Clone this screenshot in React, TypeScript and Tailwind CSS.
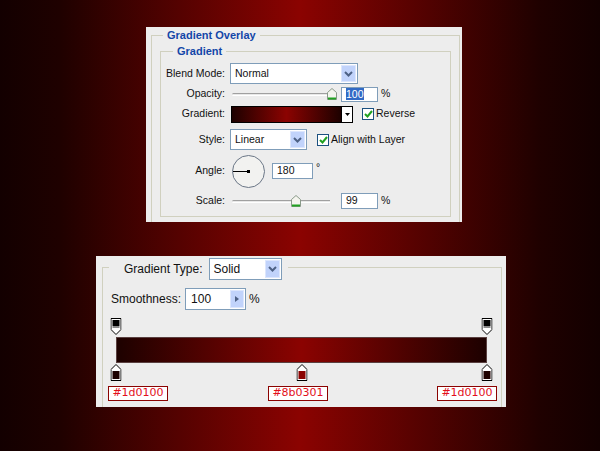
import React from "react";

// ─── Types ────────────────────────────────────────────────────────────────────

interface Stop {
  pos: number; // percent along the bar
  color: string;
}

const OPACITY_STOPS = [0, 100];

const COLOR_STOPS: Stop[] = [
  { pos: 0, color: "#1d0100" },
  { pos: 50, color: "#8b0301" },
  { pos: 100, color: "#1d0100" },
];

// ─── Small controls ───────────────────────────────────────────────────────────

function Chevron() {
  return (
    <svg width="9" height="6" viewBox="0 0 9 6">
      <path d="M1 1 L4.5 4.5 L8 1" fill="none" stroke="#4d6185" strokeWidth="2" />
    </svg>
  );
}

function Select({ value, className }: { value: string; className: string }) {
  return (
    <div className={`flex bg-white border border-[#7f9db9] ${className}`}>
      <span className="flex-1 flex items-center pl-[4px]">{value}</span>
      <div className="w-[15px] m-[1px] flex items-center justify-center bg-[#c1d3fb] border border-[#dce6fd]">
        <Chevron />
      </div>
    </div>
  );
}

function Check() {
  return (
    <div className="w-[12px] h-[12px] bg-white border border-[#1c5180] flex items-center justify-center">
      <svg width="9" height="8" viewBox="0 0 9 8">
        <path d="M1 4 L3.5 6.5 L8 1" fill="none" stroke="#21a121" strokeWidth="2" />
      </svg>
    </div>
  );
}

function Thumb() {
  return (
    <svg width="10" height="12" viewBox="0 0 10 12">
      <path d="M0.5 4.5 L5 0.5 L9.5 4.5 V11.5 H0.5 Z" fill="#f4f4ee" stroke="#8a9a8a" />
      <rect x="1" y="9.5" width="8" height="2" fill="#21a121" />
    </svg>
  );
}

function Slider({ width, thumb }: { width: string; thumb: number }) {
  return (
    <div className={`relative h-[14px] ${width}`}>
      <div className="absolute left-[2px] right-0 top-[6px] h-[3px] bg-[#e8e8e8] border-t border-[#a0a0a0] border-b border-b-white rounded-l-full" />
      <div className="absolute top-[1px]" style={{ left: thumb }}>
        <Thumb />
      </div>
    </div>
  );
}

function Input({ children, className }: { children: React.ReactNode; className: string }) {
  return (
    <div className={`flex items-center bg-white border border-[#7f9db9] pl-[4px] ${className}`}>
      {children}
    </div>
  );
}

function Row({ label, className, children }: { label: string; className: string; children: React.ReactNode }) {
  return (
    <div className={`flex items-center ${className}`}>
      <span className="w-[64px] text-right">{label}</span>
      <div className="ml-[5px] flex items-center">{children}</div>
    </div>
  );
}

function OpacityStop() {
  return (
    <svg width="11" height="17" viewBox="0 0 11 17">
      <path d="M0.5 0.5 H10.5 V11.5 L5.5 16.5 L0.5 11.5 Z" fill="#fff" stroke="#000" />
      <rect x="2" y="2" width="7" height="6" fill="#000" />
      <rect x="2" y="8" width="7" height="2" fill="#8a8a8a" />
    </svg>
  );
}

function ColorStop({ color }: { color: string }) {
  return (
    <svg width="11" height="17" viewBox="0 0 11 17">
      <path d="M5.5 0.5 L10.5 5.5 V16.5 H0.5 V5.5 Z" fill="#fff" stroke="#000" />
      <rect x="2" y="7" width="7" height="8" fill={color} />
    </svg>
  );
}

// ─── Panels ───────────────────────────────────────────────────────────────────

function OverlayPanel() {
  return (
    <div className="ml-[146px] w-[316px] h-[195px] bg-[#ededed] pt-[1px] pl-[5px] pr-[2px] text-[10.5px] text-[#111]">
      <fieldset className="h-full border border-b-0 border-[#d0d0bf] px-[8px]">
        <legend className="ml-[3px] px-[4px] leading-[14px] text-[11px] font-bold text-[#1346a8]">Gradient Overlay</legend>
        <fieldset className="mt-[2px] border border-[#d0d0bf] pb-[6px]">
          <legend className="ml-[12px] px-[4px] leading-[14px] text-[11px] font-bold text-[#1346a8]">Gradient</legend>

          <Row label="Blend Mode:" className="mt-[5px] h-[21px]">
            <Select value="Normal" className="w-[128px] h-[21px]" />
          </Row>

          <Row label="Opacity:" className="h-[20px]">
            <Slider width="w-[107px]" thumb={97} />
            <Input className="ml-[4px] w-[37px] h-[15px]">
              <span className="bg-[#316ac5] text-white leading-[12px]">100</span>
            </Input>
            <span className="ml-[3px]">%</span>
          </Row>

          <Row label="Gradient:" className="h-[20px]">
            <div className="flex ml-[1px]">
              <div className="w-[111px] h-[17px] border border-black bg-[linear-gradient(to_right,#1d0100,#8b0301_50%,#1d0100)]" />
              <div className="w-[11px] h-[17px] border border-l-0 border-black bg-white flex items-center justify-center">
                <svg width="5" height="3" viewBox="0 0 5 3">
                  <path d="M0 0 H5 L2.5 3 Z" fill="#000" />
                </svg>
              </div>
            </div>
            <div className="ml-[9px]">
              <Check />
            </div>
            <span className="ml-[2px]">Reverse</span>
          </Row>

          <Row label="Style:" className="mt-[5px] h-[21px]">
            <Select value="Linear" className="w-[77px] h-[21px]" />
            <div className="ml-[10px]">
              <Check />
            </div>
            <span className="ml-[2px]">Align with Layer</span>
          </Row>

          <Row label="Angle:" className="mt-[4px] h-[34px]">
            <div className="ml-[2px] w-[33px] h-[33px] rounded-full border-[1.5px] border-[#6a7686] bg-[#f2f2f0] flex items-center">
              <div className="w-[15px] h-px bg-black" />
              <div className="w-[3px] h-[3px] -ml-[1px] bg-black" />
            </div>
            <Input className="ml-[7px] w-[41px] h-[16px]">180</Input>
            <span className="ml-[3px] mb-[7px]">°</span>
          </Row>

          <Row label="Scale:" className="mt-[4px] h-[18px]">
            <Slider width="w-[100px]" thumb={61} />
            <Input className="ml-[11px] w-[37px] h-[16px]">99</Input>
            <span className="ml-[3px]">%</span>
          </Row>
        </fieldset>
      </fieldset>
    </div>
  );
}

function GradientEditor() {
  return (
    <div className="mt-[34px] ml-[96px] w-[410px] h-[151px] bg-[#ededed] pt-[2px] pl-[6px] pr-[4px] text-[12px] text-[#111]">
      <fieldset className="h-full border border-b-0 border-[#d0d0bf]">
        <legend className="ml-[6px] pl-[15px] pr-[6px] h-[18px] flex items-start">
          <span className="h-[22px] flex items-center">Gradient Type:</span>
          <Select value="Solid" className="ml-[6px] w-[73px] h-[22px]" />
        </legend>

        <div className="mt-[12px] pl-[8px] flex items-center">
          <span>Smoothness:</span>
          <div className="ml-[4px] w-[61px] h-[22px] flex bg-white border border-[#7f9db9]">
            <span className="flex-1 flex items-center pl-[5px]">100</span>
            <div className="w-[14px] m-[1px] bg-[#c1d3fb] border border-[#dce6fd] flex items-center justify-center">
              <svg width="4" height="6" viewBox="0 0 4 6">
                <path d="M0 0 L4 3 L0 6 Z" fill="#4d6185" />
              </svg>
            </div>
          </div>
          <span className="ml-[3px]">%</span>
        </div>

        <div className="ml-[13px] w-[371px] mt-[8px]">
          {/* opacity stops */}
          <div className="relative h-[17px]">
            {OPACITY_STOPS.map((p) => (
              <div key={p} className="absolute top-0 -translate-x-1/2" style={{ left: `${p}%` }}>
                <OpacityStop />
              </div>
            ))}
          </div>

          <div className="mt-[2px] h-[26px] border border-[#5a4040] bg-[linear-gradient(to_right,#1d0100,#8b0301_50%,#1d0100)]" />

          {/* color stops */}
          <div className="relative h-[17px] mt-[1px]">
            {COLOR_STOPS.map((s) => (
              <div key={s.pos} className="absolute top-0 -translate-x-1/2" style={{ left: `${s.pos}%` }}>
                <ColorStop color={s.color} />
              </div>
            ))}
          </div>

          {/* hex labels */}
          <div className="relative h-[15px] mt-[5px] font-['DejaVu_Sans',Verdana,sans-serif] text-[11px] text-[#e3101c]">
            <span className="absolute left-[-8px] w-[60px] h-[15px] flex items-center justify-center bg-white border border-[#8b0301]">#1d0100</span>
            <span className="absolute left-[152px] w-[60px] h-[15px] flex items-center justify-center bg-white border border-[#8b0301]">#8b0301</span>
            <span className="absolute left-[321px] w-[60px] h-[15px] flex items-center justify-center bg-white border border-[#8b0301]">#1d0100</span>
          </div>
        </div>
      </fieldset>
    </div>
  );
}

// ─── Page ─────────────────────────────────────────────────────────────────────

export default function App() {
  return (
    <div className="w-[600px] h-[451px] overflow-hidden pt-[27px] font-['Liberation_Sans',Arial,sans-serif] bg-[linear-gradient(to_right,#130000_0%,#1f0100_10%,#8b0301_50%,#1f0100_90%,#130000_100%)]">
      <OverlayPanel />
      <GradientEditor />
    </div>
  );
}
